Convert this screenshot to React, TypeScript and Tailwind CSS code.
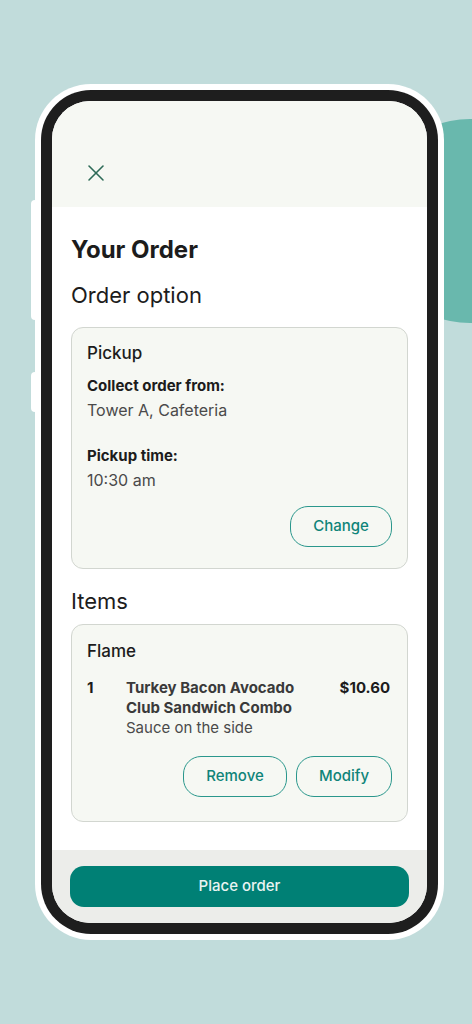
import { X } from 'lucide-react';

const font = { fontFamily: 'Inter, "Open Sans", sans-serif' };

function OutlineButton({ label, width }: { label: string; width: string }) {
  return (
    <button
      className={`${width} h-[41px] rounded-[18px] border-[1.5px] border-[#2a978c] text-[15px] font-medium text-[#0f8479] bg-transparent`}
    >
      {label}
    </button>
  );
}

export default function App() {
  return (
    <div className="relative w-[472px] h-[1024px] overflow-hidden bg-[#c1dcdb]" style={font}>
      {/* teal blob peeking out behind the device */}
      <div className="absolute left-[368px] top-[119px] w-[204px] h-[204px] rounded-full bg-[#69b8ad]" />

      <div className="relative pt-[84px] pl-[35px]">
        {/* hardware buttons on the left edge */}
        <div className="absolute left-[31px] top-[200px] w-[5px] h-[120px] rounded-l-sm bg-white" />
        <div className="absolute left-[31px] top-[372px] w-[5px] h-[40px] rounded-l-sm bg-white" />

        <div className="relative w-[409px] h-[856px] rounded-[56px] bg-white p-[6px]">
          <div className="w-full h-full rounded-[50px] bg-[#1e1e1e] p-[11px]">
            <div className="w-full h-full rounded-[38px] overflow-hidden bg-white flex flex-col">
              {/* header */}
              <div className="h-[106px] shrink-0 bg-[#f6f8f3] pl-[30px] pt-[58px]">
                <X size={28} strokeWidth={1.3} className="text-[#2d6b57]" />
              </div>

              {/* body */}
              <div className="flex-1 px-[19px] pt-[27px]">
                <h1 className="text-[24px] leading-[32px] font-bold text-[#1c1c1c]">Your Order</h1>
                <h2 className="mt-[15px] text-[22px] leading-[28px] text-[#1c1c1c]">Order option</h2>

                <div className="mt-[18px] h-[242px] rounded-[12px] border border-[#d2d6d0] bg-[#f6f8f3] px-[15px] pt-[13px] flex flex-col">
                  <div className="text-[17px] leading-[24px] font-medium text-[#1c1c1c]">Pickup</div>
                  <div className="mt-[10px] text-[15px] leading-[22px] font-bold text-[#1c1c1c]">Collect order from:</div>
                  <div className="mt-px text-[16px] leading-[24px] text-[#4a4a4a]">Tower A, Cafeteria</div>
                  <div className="mt-[23px] text-[15px] leading-[22px] font-bold text-[#1c1c1c]">Pickup time:</div>
                  <div className="mt-px text-[16px] leading-[24px] text-[#4a4a4a]">10:30 am</div>
                  <div className="mt-[14px] flex justify-end">
                    <OutlineButton label="Change" width="w-[102px]" />
                  </div>
                </div>

                <h2 className="mt-[18px] text-[22px] leading-[28px] text-[#1c1c1c]">Items</h2>

                <div className="mt-[9px] h-[198px] rounded-[12px] border border-[#d2d6d0] bg-[#f6f8f3] px-[15px] pt-[14px] flex flex-col">
                  <div className="text-[17px] leading-[24px] font-medium text-[#1c1c1c]">Flame</div>
                  <div className="mt-[15px] flex text-[15px] leading-[20px]">
                    <div className="w-[39px] font-bold text-[#1c1c1c]">1</div>
                    <div className="flex-1">
                      <div className="font-bold text-[#3a3a3a]">
                        Turkey Bacon Avocado
                        <br />
                        Club Sandwich Combo
                      </div>
                      <div className="text-[#4a4a4a]">Sauce on the side</div>
                    </div>
                    <div className="font-bold text-[#1c1c1c] pr-[2px]">$10.60</div>
                  </div>
                  <div className="mt-[18px] flex justify-end gap-[9px]">
                    <OutlineButton label="Remove" width="w-[104px]" />
                    <OutlineButton label="Modify" width="w-[96px]" />
                  </div>
                </div>
              </div>

              {/* footer */}
              <div className="h-[73px] shrink-0 bg-[#ecedea] px-[18px] pt-[16px]">
                <button className="w-full h-[41px] rounded-[14px] bg-[#008075] text-[15px] font-medium text-[#e8f4f2]">
                  Place order
                </button>
              </div>
            </div>
          </div>
        </div>
      </div>
    </div>
  );
}
